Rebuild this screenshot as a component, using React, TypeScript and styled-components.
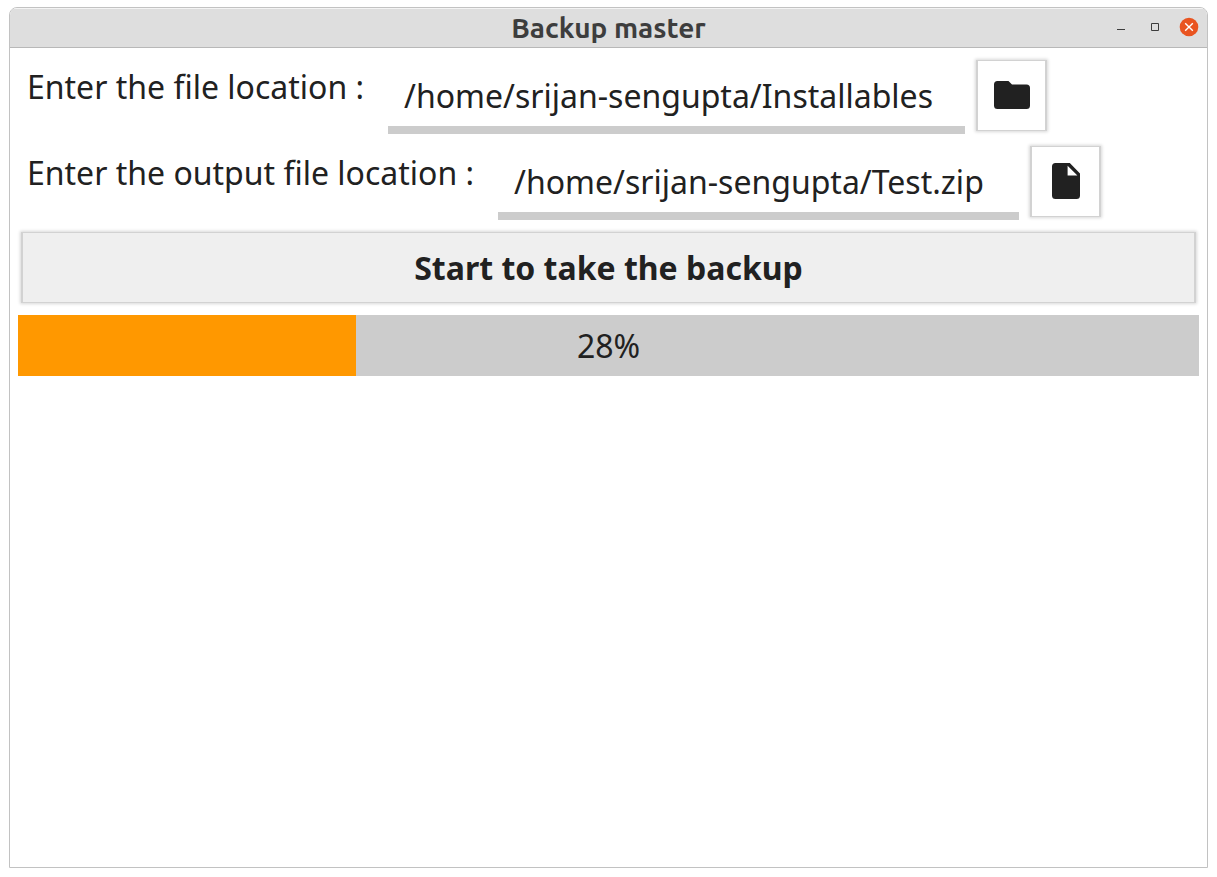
import React, { useState } from "react";
import styled, { createGlobalStyle } from "styled-components";

const GlobalStyle = createGlobalStyle`
  *, *::before, *::after { box-sizing: border-box; }
  body {
    margin: 0;
    background: #ffffff;
    color: #212121;
    font-family: "Noto Sans", "Open Sans", sans-serif;
    font-size: 32px;
    line-height: 44px;
  }
  button, input { font: inherit; color: inherit; }
`;

const Page = styled.div`
  display: flex;
  min-height: 100vh;
  padding: 7px 9px 9px;
`;

const Window = styled.div`
  flex: 1;
  min-width: 0;
  display: flex;
  flex-direction: column;
  border: 1px solid #c2c2c2;
  border-radius: 8px 8px 0 0;
  overflow: hidden;
`;

const TitleBar = styled.header`
  display: grid;
  grid-template-columns: 1fr auto 1fr;
  align-items: center;
  height: 40px;
  padding: 0 8px;
  background: #dedede;
  border-bottom: 1px solid #b8b8b8;
  box-shadow: inset 0 1px 0 #f4f4f4;
`;

const Title = styled.h1`
  grid-column: 2;
  margin: 0;
  font-family: Ubuntu, "Noto Sans", sans-serif;
  font-size: 28px;
  line-height: 38px;
  font-weight: 700;
  color: #3d3d3d;
`;

const WindowControls = styled.div`
  justify-self: end;
  display: flex;
  gap: 14px;
  padding-bottom: 1px;
`;

const WindowButton = styled.button<{ $close?: boolean }>`
  display: flex;
  width: 20px;
  height: 20px;
  padding: 0;
  border: 0;
  background: transparent;
  color: ${(p) => (p.$close ? "#ffffff" : "#3d3d3d")};
`;

const Content = styled.main`
  display: flex;
  flex-direction: column;
  gap: 8px;
  padding: 8px;
`;

const FieldRow = styled.div`
  display: flex;
  align-items: flex-start;
  gap: 8px;
`;

const Label = styled.label`
  padding: 9px 16px 0 9px;
  white-space: nowrap;
`;

const PathInput = styled.input<{ $width: number }>`
  width: ${(p) => p.$width}px;
  min-width: 0;
  height: 78px;
  padding: 8px 16px 0;
  border: 0;
  border-bottom: 8px solid #cccccc;
  background: transparent;
  outline: 0;
`;

const RaisedButton = styled.button`
  display: flex;
  align-items: center;
  justify-content: center;
  height: 71px;
  margin: 4px 3px 3px;
  padding: 0 16px;
  border: solid #d2d2d2;
  border-width: 1px 2px;
  background: #efefef;
  box-shadow: 0 0 3px 1px #d8d8d8;
  font-weight: 700;
`;

const PickerButton = styled(RaisedButton)`
  flex: none;
  width: 71px;
  padding: 0 0 2px;
  background: #ffffff;
`;

const Progress = styled.div`
  position: relative;
  height: 61px;
  margin-top: 1px;
  background: #cccccc;
`;

const ProgressFill = styled.div`
  height: 100%;
  background: #ff9800;
`;

const ProgressText = styled.span`
  position: absolute;
  inset: 0;
  display: flex;
  align-items: center;
  justify-content: center;
`;

const FolderIcon = () => (
  <svg width="36" height="28" viewBox="0 0 36 28" aria-hidden="true">
    <path
      fill="#212121"
      d="M3.5 0H14.5L18 3.5H32.5A3.5 3.5 0 0 1 36 7V24.5A3.5 3.5 0 0 1 32.5 28H3.5A3.5 3.5 0 0 1 0 24.5V3.5A3.5 3.5 0 0 1 3.5 0Z"
    />
  </svg>
);

const FileIcon = () => (
  <svg width="28" height="36" viewBox="0 0 28 36" aria-hidden="true">
    <path
      fill="#212121"
      fillRule="evenodd"
      d="M3.5 0H17.8L28 10.5V32.5A3.5 3.5 0 0 1 24.5 36H3.5A3.5 3.5 0 0 1 0 32.5V3.5A3.5 3.5 0 0 1 3.5 0ZM15.6 2.8V12.6H25.4Z"
    />
  </svg>
);

export default function App() {
  const [source, setSource] = useState("/home/srijan-sengupta/Installables");
  const [output, setOutput] = useState("/home/srijan-sengupta/Test.zip");
  const progress = 28;
  const fill = 28.6;

  return (
    <>
      <GlobalStyle />
      <Page>
        <Window>
          <TitleBar>
            <Title>Backup master</Title>
            <WindowControls>
              <WindowButton type="button" aria-label="Minimize">
                <svg width="20" height="20" viewBox="0 0 20 20" fill="currentColor">
                  <path d="M6 12h8v1H6z" />
                </svg>
              </WindowButton>
              <WindowButton type="button" aria-label="Maximize">
                <svg width="20" height="20" viewBox="0 0 20 20" fill="none" stroke="currentColor">
                  <path d="M6.5 6.5h7v7h-7z" />
                </svg>
              </WindowButton>
              <WindowButton type="button" aria-label="Close" $close>
                <svg width="20" height="20" viewBox="0 0 20 20" fill="none" stroke="currentColor" strokeWidth="1.4">
                  <circle cx="10" cy="10" r="9.3" fill="#e95420" stroke="none" />
                  <path d="M6.2 6.2l7.6 7.6M13.8 6.2l-7.6 7.6" />
                </svg>
              </WindowButton>
            </WindowControls>
          </TitleBar>
          <Content>
            <FieldRow>
              <Label htmlFor="source">Enter the file location :</Label>
              <PathInput id="source" $width={577} value={source} onChange={(e) => setSource(e.target.value)} />
              <PickerButton type="button" aria-label="Choose folder">
                <FolderIcon />
              </PickerButton>
            </FieldRow>
            <FieldRow>
              <Label htmlFor="output">Enter the output file location :</Label>
              <PathInput id="output" $width={521} value={output} onChange={(e) => setOutput(e.target.value)} />
              <PickerButton type="button" aria-label="Choose output file">
                <FileIcon />
              </PickerButton>
            </FieldRow>
            <RaisedButton type="button">Start to take the backup</RaisedButton>
            <Progress role="progressbar" aria-label="Backup progress" aria-valuenow={progress} aria-valuemin={0} aria-valuemax={100}>
              <ProgressFill style={{ width: `${fill}%` }} />
              <ProgressText>{progress}%</ProgressText>
            </Progress>
          </Content>
        </Window>
      </Page>
    </>
  );
}
